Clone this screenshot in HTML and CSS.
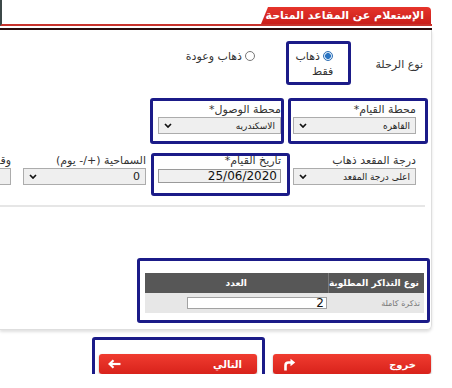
FILE: index.html
```html
<!DOCTYPE html>
<html lang="ar">
<head>
<meta charset="utf-8">
<title>الإستعلام عن المقاعد المتاحة</title>
<link rel="stylesheet" href="styles.css">
</head>
<body>
<div class="page" dir="rtl">
  <div class="header">
    <div class="tab">الإستعلام عن المقاعد المتاحة</div>
  </div>
  <div class="rule"></div>

  <div class="panel">
    <div class="trip-row">
      <div class="trip-label">نوع الرحلة</div>
      <div class="radios">
        <label class="radio hl hl-oneway"><span class="dot on"></span> ذهاب<br>فقط</label>
        <label class="radio"><span class="dot"></span> ذهاب وعودة</label>
      </div>
    </div>

    <div class="fields stations">
      <div class="field hl hl-dep">
        <div class="flabel">محطة القيام*</div>
        <div class="select"><span>القاهره</span><svg class="chev" width="8" height="5" viewBox="0 0 8 5"><path d="M1 1l3 3 3-3"/></svg></div>
      </div>
      <div class="field hl hl-arr">
        <div class="flabel">محطة الوصول*</div>
        <div class="select"><span>الاسكندريه</span><svg class="chev" width="8" height="5" viewBox="0 0 8 5"><path d="M1 1l3 3 3-3"/></svg></div>
      </div>
    </div>

    <div class="fields details">
      <div class="field">
        <div class="flabel">درجة المقعد ذهاب</div>
        <div class="select"><span>اعلى درجة المقعد</span><svg class="chev" width="8" height="5" viewBox="0 0 8 5"><path d="M1 1l3 3 3-3"/></svg></div>
      </div>
      <div class="field hl hl-date">
        <div class="flabel">تاريخ القيام*</div>
        <div class="dateinput"><span dir="ltr">25/06/2020</span></div>
      </div>
      <div class="field">
        <div class="flabel">السماحية (+/- يوم)</div>
        <div class="select"><span class="zero">0</span><svg class="chev" width="8" height="5" viewBox="0 0 8 5"><path d="M1 1l3 3 3-3"/></svg></div>
      </div>
      <div class="field">
        <div class="flabel">وقت القيام</div>
        <div class="select plain"></div>
      </div>
    </div>

    <div class="divider"></div>

    <div class="tickets hl hl-tickets">
      <table class="ttable">
        <thead>
          <tr><th class="c-type">نوع التذاكر المطلوبة</th><th class="c-count">العدد</th></tr>
        </thead>
        <tbody>
          <tr><td class="c-type">تذكرة كاملة</td><td class="c-count"><div class="num"><span dir="ltr">2</span></div></td></tr>
        </tbody>
      </table>
    </div>
  </div>

  <div class="actions">
    <div class="btn">
      <span>خروج</span>
      <svg width="14" height="13" viewBox="0 0 14 13"><path d="M3.5 12.5V7.5Q3.5 4.5 6.5 4.5H9" fill="none" stroke="#fff" stroke-width="2.6"/><path d="M8.5 0.8L13.2 4.5L8.5 8.2Z" fill="#fff"/></svg>
    </div>
    <div class="btn hl hl-next">
      <span>التالي</span>
      <svg width="13" height="10" viewBox="0 0 13 10"><path d="M12.5 5H2.5" stroke="#fff" stroke-width="2.2" fill="none"/><path d="M5.5 1.2L1.6 5L5.5 8.8" stroke="#fff" stroke-width="2.2" fill="none"/></svg>
    </div>
  </div>
</div>
</body>
</html>
```

FILE: styles.css
```css
* { box-sizing: border-box; }

body {
  margin: 0;
  background: #fff;
  font-family: "DejaVu Sans", sans-serif;
  color: #333;
}

.page {
  width: 432px;
}

/* ---------- header ---------- */
.header {
  padding-top: 7px;
  border-bottom: 2px solid #c8322c;
  border-left: 2px solid #3c4848;
}

.tab {
  width: 170px;
  height: 17px;
  margin-right: 1px;
  padding-right: 7px;
  background: linear-gradient(#e6342b, #c91f1b);
  color: #fff;
  font-size: 11px;
  font-weight: bold;
  line-height: 17px;
  white-space: nowrap;
  border-radius: 4px 4px 0 0;
  clip-path: polygon(7px 0, 100% 0, 100% 100%, 0 100%);
}

.rule {
  height: 2px;
  margin-top: 2px;
  background: #2b0d0d;
}

/* ---------- panel ---------- */
.panel {
  position: relative;
  overflow: hidden;
  padding: 19px 0 16px;
  border-right: 1px solid #dedede;
  border-bottom: 1px solid #dedede;
  border-bottom-right-radius: 5px;
  box-shadow: 0 2px 3px rgba(0, 0, 0, 0.12);
}

.trip-row {
  display: flex;
  align-items: center;
  gap: 42px;
  padding-right: 8px;
}

.trip-label {
  font-size: 11px;
  white-space: nowrap;
}

.radios {
  display: flex;
  align-items: flex-start;
  gap: 40px;
}

.radio {
  display: block;
  font-size: 11px;
  line-height: 15px;
  white-space: nowrap;
}

.dot {
  display: inline-block;
  width: 10px;
  height: 10px;
  vertical-align: -1px;
  border: 1px solid #777;
  border-radius: 50%;
  background: #fff;
}

.dot.on {
  border-color: #2f6fb5;
  background: radial-gradient(circle, #2a74c2 0 2.6px, #d9e8f7 3.2px);
}

.fields {
  display: grid;
  grid-template-columns: repeat(4, 123px);
  column-gap: 12px;
  padding-right: 15px;
}

.stations { margin-top: 24px; }
.details { margin-top: 20px; }

.flabel {
  font-size: 11px;
  line-height: 14px;
  white-space: nowrap;
}

.select {
  display: flex;
  align-items: center;
  justify-content: space-between;
  height: 17px;
  padding: 0 5px 0 5px;
  border: 1px solid #acacac;
  background: #efefef;
  font-size: 9px;
  color: #222;
  white-space: nowrap;
}

.select .zero {
  font-size: 11px;
}

.chev path {
  fill: none;
  stroke: #111;
  stroke-width: 1.7;
}

.dateinput {
  height: 14px;
  margin-top: 1px;
  padding-right: 3px;
  border: 1px solid #9a9a9a;
  background: #f0f0f0;
  font-size: 12px;
  line-height: 12px;
  color: #111;
}

.divider {
  height: 2px;
  margin: 20px 6px 0 0;
  background: #e6e6e6;
}

/* ---------- tickets ---------- */
.tickets {
  width: 279px;
  margin: 66px 7px 0 0;
}

.ttable {
  width: 100%;
  border-collapse: collapse;
}

.ttable th {
  height: 20px;
  padding: 0;
  background: #575757;
  color: #fff;
  font-size: 9px;
  font-weight: bold;
}

.ttable th.c-type {
  width: 96px;
  padding-right: 5px;
  text-align: right;
  border-left: 1px solid #7a7a7a;
}

.ttable th.c-count {
  text-align: center;
}

.ttable td {
  height: 20px;
  padding: 0;
  background: #e7e7e7;
}

.ttable td.c-type {
  padding-right: 4px;
  font-size: 8px;
  color: #777;
}

.ttable td.c-count {
  padding-right: 1px;
}

.num {
  width: 140px;
  height: 12px;
  padding-right: 2px;
  border: 1px solid #a2a2a2;
  background: #fff;
  font-size: 12px;
  line-height: 10px;
  color: #111;
}

/* ---------- buttons ---------- */
.actions {
  display: flex;
  gap: 16px;
  margin-top: 24px;
  padding-right: 1px;
}

.btn {
  display: flex;
  align-items: center;
  justify-content: space-between;
  width: 158px;
  height: 20px;
  padding: 0 15px 0 9px;
  border-radius: 3px;
  background: linear-gradient(#f03c30, #d8221b);
  box-shadow: 0 1px 2px rgba(0, 0, 0, 0.35);
  color: #fff;
  font-size: 10px;
  font-weight: bold;
}

/* ---------- highlight annotations ---------- */
.hl { position: relative; }

.hl::after {
  content: "";
  position: absolute;
  border: 3px solid #1b1b88;
  border-radius: 3px;
  pointer-events: none;
}

.hl-oneway::after { top: -8px; bottom: -6px; left: -9px; right: -18px; }
.hl-dep::after { top: -5px; bottom: -10px; left: -5px; right: -12px; }
.hl-arr::after { top: -5px; bottom: -10px; left: -8px; right: -3px; }
.hl-date::after { top: -1px; bottom: -11px; left: -7px; right: -9px; }
.hl-tickets::after { top: -15px; bottom: -10px; left: -8px; right: -6px; }
.hl-next::after { top: -17px; bottom: -10px; left: -7px; right: -8px; }
```
